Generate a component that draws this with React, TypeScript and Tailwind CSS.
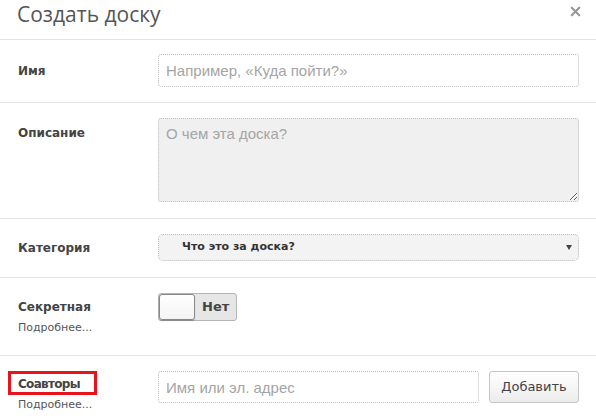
import { X } from 'lucide-react';

const labelFont = { fontFamily: '"DejaVu Sans", Verdana, sans-serif' };

function Label({ text, more, tight }: { text: string; more?: boolean; tight?: boolean }) {
  return (
    <div className="pl-[18px]" style={labelFont}>
      <div className={tight ? 'text-[12px] font-bold leading-[16px] tracking-[-0.7px] text-[#444]' : 'text-[12px] font-bold leading-[16px] text-[#444]'}>
        {text}
      </div>
      {more && <div className="mt-[6px] text-[11px] leading-[14px] text-[#555]">Подробнее...</div>}
    </div>
  );
}

export default function App() {
  return (
    <div className="relative h-[418px] w-[596px] overflow-hidden bg-white font-['Liberation_Sans',Arial,sans-serif]">
      <div className="flex h-[40px] items-start justify-between border-b border-[#e3e3e3] pl-[17px] pr-[13px]">
        <h1 className="font-['Open_Sans',sans-serif] text-[21px] font-normal leading-[28px] text-[#555]">Создать доску</h1>
        <button className="mt-[4px] text-[#999]">
          <X size={15} strokeWidth={3.5} />
        </button>
      </div>

      <div className="grid h-[63px] grid-cols-[158px_1fr] items-center border-b border-[#e3e3e3] pr-[17px]">
        <Label text="Имя" />
        <input
          className="mt-[-1px] h-[33px] rounded-[3px] border border-dotted border-[#bbb] bg-white px-[7px] text-[15px] text-[#333] placeholder:text-[#a5a5a5] outline-none"
          placeholder="Например, «Куда пойти?»"
        />
      </div>

      <div className="grid h-[116px] grid-cols-[158px_1fr] border-b border-[#e3e3e3] pr-[17px] pt-[15px]">
        <div className="pt-[7px]">
          <Label text="Описание" />
        </div>
        <textarea
          className="h-[84px] resize-y rounded-[3px] border border-dotted border-[#bbb] bg-[#f0f0f0] px-[7px] py-[4px] text-[15px] text-[#333] placeholder:text-[#a5a5a5] outline-none"
          placeholder="О чем эта доска?"
        />
      </div>

      <div className="grid h-[59px] grid-cols-[158px_1fr] items-center border-b border-[#e3e3e3] pr-[17px]">
        <Label text="Категория" />
        <div className="relative mt-[-2px] flex h-[27px] items-center rounded-[5px] border border-dotted border-[#bbb] bg-[#f3f3f3] pl-[23px]" style={labelFont}>
          <span className="text-[11px] font-bold text-[#333]">Что это за доска?</span>
          <span className="absolute right-[6px] top-[10px] h-0 w-0 border-x-[3px] border-t-[5px] border-x-transparent border-t-[#444]" />
        </div>
      </div>

      <div className="grid h-[78px] grid-cols-[158px_1fr] border-b border-[#e3e3e3] pr-[17px] pt-[21px]">
        <Label text="Секретная" more />
        <div className="mt-[-6px] flex h-[28px] w-[79px] items-stretch rounded-[3px] border border-[#b5b5b5] bg-[#e6e6e6]" style={labelFont}>
          <div className="w-[36px] rounded-[3px] border border-[#888] bg-gradient-to-b from-white to-[#f4f4f4] shadow-[0_1px_1px_rgba(0,0,0,0.25)]" />
          <span className="flex flex-1 items-center pl-[7px] text-[13px] font-bold text-[#444]">Нет</span>
        </div>
      </div>

      <div className="grid grid-cols-[158px_1fr] pr-[17px] pt-[15px]">
        <div className="relative pt-[5px]">
          <Label text="Соавторы" more tight />
          <div className="absolute left-[8px] top-0 h-[24px] w-[89px] border-[3px] border-[#e8141c]" />
        </div>
        <div className="flex gap-[10px]">
          <input
            className="h-[32px] w-[321px] rounded-[3px] border border-dotted border-[#bbb] bg-white px-[7px] text-[15px] text-[#333] placeholder:text-[#a5a5a5] outline-none"
            placeholder="Имя или эл. адрес"
          />
          <button
            className="h-[32px] w-[90px] rounded-[3px] border border-[#c5c5c5] bg-gradient-to-b from-white to-[#ececec] text-[13px] text-[#444]"
            style={labelFont}
          >
            Добавить
          </button>
        </div>
      </div>
    </div>
  );
}
